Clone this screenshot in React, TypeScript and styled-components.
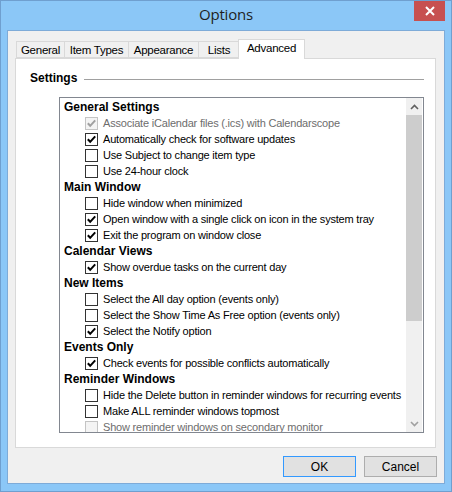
import styled, { createGlobalStyle } from "styled-components";

const GlobalStyle = createGlobalStyle`
  html, body {
    margin: 0;
    padding: 0;
    background: #ffffff;
  }
  * {
    box-sizing: border-box;
  }
`;

type Item = { label: string; checked?: boolean; disabled?: boolean };
type Section = { title: string; items: Item[] };

const sections: Section[] = [
  {
    title: "General Settings",
    items: [
      { label: "Associate iCalendar files (.ics) with Calendarscope", checked: true, disabled: true },
      { label: "Automatically check for software updates", checked: true },
      { label: "Use Subject to change item type" },
      { label: "Use 24-hour clock" },
    ],
  },
  {
    title: "Main Window",
    items: [
      { label: "Hide window when minimized" },
      { label: "Open window with a single click on icon in the system tray", checked: true },
      { label: "Exit the program on window close", checked: true },
    ],
  },
  {
    title: "Calendar Views",
    items: [{ label: "Show overdue tasks on the current day", checked: true }],
  },
  {
    title: "New Items",
    items: [
      { label: "Select the All day option (events only)" },
      { label: "Select the Show Time As Free option (events only)" },
      { label: "Select the Notify option", checked: true },
    ],
  },
  {
    title: "Events Only",
    items: [{ label: "Check events for possible conflicts automatically", checked: true }],
  },
  {
    title: "Reminder Windows",
    items: [
      { label: "Hide the Delete button in reminder windows for recurring events" },
      { label: "Make ALL reminder windows topmost" },
      { label: "Show reminder windows on secondary monitor", disabled: true },
    ],
  },
];

const tabs = [
  { label: "General", width: 49 },
  { label: "Item Types", width: 65 },
  { label: "Appearance", width: 71 },
  { label: "Lists", width: 42 },
  { label: "Advanced", width: 67, active: true },
];

const Window = styled.div`
  width: 452px;
  height: 492px;
  display: flex;
  flex-direction: column;
  background: #8bc7f7;
  border: 1px solid #6f9fcf;
  padding: 0 6px 7px 6px;
  font-family: "Liberation Sans", Arial, sans-serif;
  font-size: 11px;
  color: #000;
`;

const TitleBar = styled.div`
  position: relative;
  height: 29px;
  margin: 0 -6px;
  padding-bottom: 3px;
  display: flex;
  align-items: center;
  justify-content: center;
`;

const Title = styled.div`
  font-family: "Open Sans", "Noto Sans", sans-serif;
  font-size: 15px;
  letter-spacing: -0.2px;
  color: #1f1f1f;
`;

const CloseButton = styled.div`
  position: absolute;
  top: 0;
  right: 6px;
  width: 31px;
  height: 20px;
  background: #c75050;
  display: flex;
  align-items: center;
  justify-content: center;
`;

const Client = styled.div`
  flex: 1;
  display: flex;
  flex-direction: column;
  background: #f0f0f0;
  border: 1px solid #7eabd8;
  padding: 8px 8px 6px 7px;
`;

const TabStrip = styled.div`
  display: flex;
  align-items: flex-end;
  height: 20px;
  margin-bottom: -1px;
  padding-left: 1px;
  position: relative;
  z-index: 1;
`;

const Tab = styled.div<{ $active?: boolean; $width: number }>`
  width: ${(p) => p.$width}px;
  height: ${(p) => (p.$active ? 20 : 17)}px;
  margin-left: ${(p) => (p.$active ? -2 : -1)}px;
  margin-bottom: ${(p) => (p.$active ? 0 : 1)}px;
  display: flex;
  align-items: ${(p) => (p.$active ? "flex-start" : "center")};
  padding-top: ${(p) => (p.$active ? 2 : 0)}px;
  justify-content: center;
  border: 1px solid #d9d9d9;
  border-bottom: ${(p) => (p.$active ? "none" : "1px solid #d9d9d9")};
  background: ${(p) => (p.$active ? "#ffffff" : "#f0f0f0")};
  font-size: 11.5px;
  letter-spacing: -0.25px;
  white-space: nowrap;
  position: relative;
  z-index: ${(p) => (p.$active ? 2 : 1)};
  &:first-child {
    margin-left: 0;
  }
`;

const TabPanel = styled.div`
  flex: 1;
  background: #ffffff;
  border: 1px solid #d9d9d9;
  padding: 12px 11px 0 14px;
  display: flex;
  flex-direction: column;
`;

const GroupHeader = styled.div`
  display: flex;
  align-items: center;
  height: 14px;
  gap: 7px;
`;

const GroupTitle = styled.div`
  font-weight: bold;
  font-size: 12px;
  line-height: 14px;
`;

const GroupLine = styled.div`
  flex: 1;
  height: 1px;
  background: #a0a0a0;
  margin-top: 2px;
`;

const ListBox = styled.div`
  margin: 12px 0 0 29px;
  height: 336px;
  border: 1px solid #828790;
  display: flex;
  background: #ffffff;
`;

const ListContent = styled.div`
  flex: 1;
  overflow: hidden;
  padding-left: 4px;
  padding-top: 1px;
`;

const HeaderRow = styled.div`
  height: 16px;
  line-height: 16px;
  font-weight: bold;
  font-size: 12px;
  white-space: nowrap;
`;

const ItemRow = styled.div<{ $disabled?: boolean }>`
  height: 16px;
  display: flex;
  align-items: center;
  padding-left: 21px;
  gap: 5px;
  white-space: nowrap;
  letter-spacing: -0.2px;
  color: ${(p) => (p.$disabled ? "#6d6d6d" : "#000000")};
`;

const Box = styled.div<{ $disabled?: boolean }>`
  width: 13px;
  height: 13px;
  flex: none;
  border: 1px solid ${(p) => (p.$disabled ? "#c4c4c4" : "#333333")};
  background: ${(p) => (p.$disabled ? "#f4f4f4" : "#ffffff")};
  display: flex;
  align-items: center;
  justify-content: center;
`;

const ScrollBar = styled.div`
  width: 16px;
  margin-right: 1px;
  background: #f0f0f0;
  display: flex;
  flex-direction: column;
`;

const ScrollArrow = styled.div`
  height: 17px;
  display: flex;
  align-items: center;
  justify-content: center;
`;

const Thumb = styled.div`
  height: 206px;
  background: #cdcdcd;
`;

const Track = styled.div`
  flex: 1;
`;

const ButtonRow = styled.div`
  display: flex;
  justify-content: flex-end;
  gap: 8px;
  padding-top: 8px;
  margin-right: -1px;
`;

const Button = styled.div<{ $default?: boolean }>`
  width: 73px;
  height: 21px;
  display: flex;
  align-items: center;
  justify-content: center;
  background: #e1e1e1;
  border: 1px solid ${(p) => (p.$default ? "#3399ff" : "#adadad")};
  font-size: 12px;
`;

const Check = ({ color }: { color: string }) => (
  <svg width="11" height="11" viewBox="0 0 11 11">
    <path d="M1.8 5.2 L4.2 7.8 L9.2 2.3" fill="none" stroke={color} strokeWidth="2" />
  </svg>
);

const CheckBox = ({ item }: { item: Item }) => (
  <ItemRow $disabled={item.disabled}>
    <Box $disabled={item.disabled}>
      {item.checked && <Check color={item.disabled ? "#a0a0a0" : "#000000"} />}
    </Box>
    {item.label}
  </ItemRow>
);

export default function App() {
  return (
    <>
      <GlobalStyle />
      <Window>
        <TitleBar>
          <Title>Options</Title>
          <CloseButton>
            <svg width="10" height="10" viewBox="0 0 10 10">
              <path d="M1 1 L9 9 M9 1 L1 9" stroke="#ffffff" strokeWidth="2" />
            </svg>
          </CloseButton>
        </TitleBar>
        <Client>
          <TabStrip>
            {tabs.map((t) => (
              <Tab key={t.label} $active={t.active} $width={t.width}>
                {t.label}
              </Tab>
            ))}
          </TabStrip>
          <TabPanel>
            <GroupHeader>
              <GroupTitle>Settings</GroupTitle>
              <GroupLine />
            </GroupHeader>
            <ListBox>
              <ListContent>
                {sections.map((s) => (
                  <div key={s.title}>
                    <HeaderRow>{s.title}</HeaderRow>
                    {s.items.map((it) => (
                      <CheckBox key={it.label} item={it} />
                    ))}
                  </div>
                ))}
              </ListContent>
              <ScrollBar>
                <ScrollArrow>
                  <svg width="9" height="6" viewBox="0 0 9 6">
                    <path d="M1 5 L4.5 1.5 L8 5" fill="none" stroke="#606060" strokeWidth="1.6" />
                  </svg>
                </ScrollArrow>
                <Thumb />
                <Track />
                <ScrollArrow>
                  <svg width="9" height="6" viewBox="0 0 9 6">
                    <path d="M1 1 L4.5 4.5 L8 1" fill="none" stroke="#a0a0a0" strokeWidth="1.6" />
                  </svg>
                </ScrollArrow>
              </ScrollBar>
            </ListBox>
          </TabPanel>
          <ButtonRow>
            <Button $default>OK</Button>
            <Button>Cancel</Button>
          </ButtonRow>
        </Client>
      </Window>
    </>
  );
}
